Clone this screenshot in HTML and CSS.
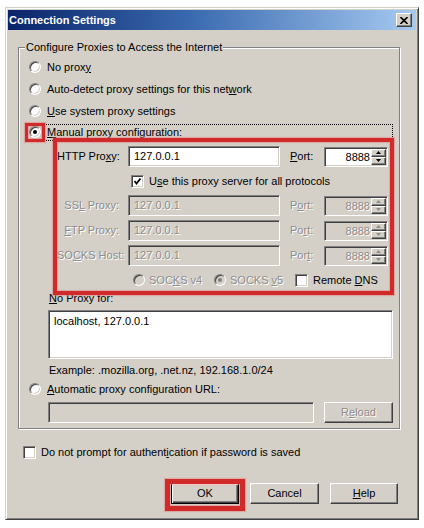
FILE: index.html
```html
<!DOCTYPE html>
<html>
<head>
<meta charset="utf-8">
<link rel="stylesheet" href="styles.css">
</head>
<body>
<div class="window">
  <div class="titlebar">
    <span class="title">Connection Settings</span>
    <span class="close"><svg width="8" height="7" viewBox="0 0 8 7"><path d="M0.5 0 L7.5 7 M7.5 0 L0.5 7" stroke="#000" stroke-width="1.6"/></svg></span>
  </div>
  <div class="client">
    <fieldset class="group">
      <legend>Configure Proxies to Access the Internet</legend>
      <div class="opt"><span class="slot"><span class="radio"></span></span><span>No prox<u>y</u></span></div>
      <div class="opt"><span class="slot"><span class="radio"></span></span><span>Auto-detect proxy settings for this net<u>w</u>ork</span></div>
      <div class="opt"><span class="slot"><span class="radio"></span></span><span><u>U</u>se system proxy settings</span></div>
      <div class="opt opt-manual"><span class="slot"><span class="radio on"></span><span class="mark mark-radio"></span></span><span class="focus"><u>M</u>anual proxy configuration:</span></div>
      <div class="manual">
        <span class="mark mark-manual"></span>
        <div class="prow">
          <span class="plabel">HTTP Pro<u>x</u>y:</span>
          <span class="field host">127.0.0.1</span>
          <span class="portlabel"><u>P</u>ort:</span>
          <span class="field spin"><span class="val">8888</span><span class="arrows"><span class="arr"><svg width="5" height="3" viewBox="0 0 5 3"><polygon points="0,3 2.5,0 5,3" fill="#000"/></svg></span><span class="arr"><svg width="5" height="3" viewBox="0 0 5 3"><polygon points="0,0 5,0 2.5,3" fill="#000"/></svg></span></span></span>
        </div>
        <div class="chkrow"><span class="check"><svg width="9" height="9" viewBox="0 0 9 9"><polyline points="1.5,4 3.5,6.5 7.5,1.5" fill="none" stroke="#000" stroke-width="1.8"/></svg></span><span>U<u>s</u>e this proxy server for all protocols</span></div>
        <div class="prow dis">
          <span class="plabel">SS<u>L</u> Proxy:</span>
          <span class="field host">127.0.0.1</span>
          <span class="portlabel">P<u>o</u>rt:</span>
          <span class="field spin"><span class="val">8888</span><span class="arrows"><span class="arr"><svg width="5" height="3" viewBox="0 0 5 3"><polygon points="0,3 2.5,0 5,3" fill="#8d8d8d"/></svg></span><span class="arr"><svg width="5" height="3" viewBox="0 0 5 3"><polygon points="0,0 5,0 2.5,3" fill="#8d8d8d"/></svg></span></span></span>
        </div>
        <div class="prow dis">
          <span class="plabel"><u>F</u>TP Proxy:</span>
          <span class="field host">127.0.0.1</span>
          <span class="portlabel">Po<u>r</u>t:</span>
          <span class="field spin"><span class="val">8888</span><span class="arrows"><span class="arr"><svg width="5" height="3" viewBox="0 0 5 3"><polygon points="0,3 2.5,0 5,3" fill="#8d8d8d"/></svg></span><span class="arr"><svg width="5" height="3" viewBox="0 0 5 3"><polygon points="0,0 5,0 2.5,3" fill="#8d8d8d"/></svg></span></span></span>
        </div>
        <div class="prow dis">
          <span class="plabel">SO<u>C</u>KS Host:</span>
          <span class="field host">127.0.0.1</span>
          <span class="portlabel">Por<u>t</u>:</span>
          <span class="field spin"><span class="val">8888</span><span class="arrows"><span class="arr"><svg width="5" height="3" viewBox="0 0 5 3"><polygon points="0,3 2.5,0 5,3" fill="#8d8d8d"/></svg></span><span class="arr"><svg width="5" height="3" viewBox="0 0 5 3"><polygon points="0,0 5,0 2.5,3" fill="#8d8d8d"/></svg></span></span></span>
        </div>
        <div class="verrow">
          <span class="ver dis"><span class="radio"></span><span>SOC<u>K</u>S v4</span></span>
          <span class="ver dis"><span class="radio on"></span><span>SOCKS <u>v</u>5</span></span>
          <span class="ver"><span class="check"></span><span>Remote <u>D</u>NS</span></span>
        </div>
        <div class="nplabel"><u>N</u>o Proxy for:</div>
        <div class="field textarea">localhost, 127.0.0.1</div>
        <div class="example">Example: .mozilla.org, .net.nz, 192.168.1.0/24</div>
      </div>
      <div class="opt opt-auto"><span class="slot"><span class="radio"></span></span><span><u>A</u>utomatic proxy configuration URL:</span></div>
      <div class="urlrow">
        <span class="field url dis"></span>
        <span class="btn reload dis">R<u>e</u>load</span>
      </div>
    </fieldset>
    <div class="prompt"><span class="check"></span><span>Do not prompt for authent<u>i</u>cation if password is saved</span></div>
    <div class="buttons">
      <span class="okwrap"><span class="btn btn-default">OK</span><span class="mark mark-ok"></span></span>
      <span class="btn btn-cancel">Cancel</span>
      <span class="btn"><u>H</u>elp</span>
    </div>
  </div>
</div>
</body>
</html>
```
FILE: styles.css
```css
body {
  margin: 0;
  background: #fff;
  font: 11px/13px "Liberation Sans", Arial, sans-serif;
  color: #000;
}
u { text-underline-offset: 1px; }

.window {
  margin: 7px 0 0 5px;
  width: 414px;
  height: 513px;
  box-sizing: border-box;
  background: #d4d0c8;
  border: 1px solid;
  border-color: #d4d0c8 #404040 #404040 #d4d0c8;
  box-shadow: inset 1px 1px #fff, inset -1px -1px #808080;
  padding: 2px;
  display: flex;
  flex-direction: column;
}

.titlebar {
  height: 20px;
  flex: none;
  display: flex;
  align-items: center;
  background: linear-gradient(to right, #0a246a 0%, #3a6ab0 45%, #a6caf0 100%);
  padding: 0 4px 0 1px;
}
.title {
  flex: 1;
  color: #fff;
  font-weight: bold;
}
.close {
  width: 16px;
  height: 14px;
  box-sizing: border-box;
  background: #d4d0c8;
  border: 1px solid;
  border-color: #fff #404040 #404040 #fff;
  box-shadow: inset -1px -1px #808080;
  display: flex;
  align-items: center;
  justify-content: center;
}

.client {
  flex: 1;
  display: flex;
  flex-direction: column;
}

.group {
  margin: 11px 0 0 10px;
  width: 382px;
  box-sizing: border-box;
  min-width: 0;
  border: 1px solid #808080;
  box-shadow: 1px 1px 0 #fff, inset 1px 1px 0 #fff;
  padding: 2px 6px 5px 6px;
}
.group legend {
  padding: 0 1px;
  line-height: 13px;
  background: #d4d0c8;
}

.opt {
  display: flex;
  align-items: center;
  height: 22px;
}
.opt-manual { height: 20px; }
.opt-auto { margin-top: 1px; }

.slot {
  position: relative;
  flex: none;
  width: 20px;
  height: 19px;
  margin-right: 2px;
  display: flex;
  align-items: center;
  justify-content: center;
}

.radio {
  flex: none;
  width: 12px;
  height: 12px;
  box-sizing: border-box;
  border-radius: 50%;
  border: 1px solid;
  border-color: #808080 #fff #fff #808080;
  box-shadow: inset 1px 1px #404040, inset -1px -1px #d4d0c8;
  background: #fff;
  display: flex;
  align-items: center;
  justify-content: center;
}
.radio.on::after {
  content: "";
  width: 4px;
  height: 4px;
  border-radius: 50%;
  background: #000;
}
.dis .radio { background: #d4d0c8; }
.dis .radio.on::after { background: #808080; }

.check {
  flex: none;
  width: 13px;
  height: 13px;
  box-sizing: border-box;
  border: 1px solid;
  border-color: #808080 #fff #fff #808080;
  box-shadow: inset 1px 1px #404040, inset -1px -1px #d4d0c8;
  background: #fff;
  margin-right: 5px;
  display: flex;
  align-items: center;
  justify-content: center;
}

.focus {
  flex: 1;
  height: 17px;
  box-sizing: border-box;
  display: flex;
  align-items: center;
  margin-left: -3px;
  padding-left: 2px;
  border: 1px dotted #000;
}

.mark {
  position: absolute;
  box-sizing: border-box;
  border: 3px solid #d12a2a;
  box-shadow: 0 0 1px 1px rgba(230, 120, 120, 0.45), inset 0 0 1px 1px rgba(230, 120, 120, 0.45);
  pointer-events: none;
}
.mark-radio { left: 0; top: 0; width: 20px; height: 19px; }
.mark-manual { left: 28px; top: -4px; width: 341px; height: 157px; border-width: 4px; }
.mark-ok { left: -6px; top: -4px; width: 80px; height: 32px; border-width: 5px; }

.manual {
  position: relative;
  padding-top: 4px;
}

.field {
  box-sizing: border-box;
  border: 1px solid;
  border-color: #808080 #fff #fff #808080;
  box-shadow: inset 1px 1px #404040, inset -1px -1px #d4d0c8;
  background: #fff;
}

.prow {
  display: flex;
  align-items: center;
  height: 21px;
  margin-left: 32px;
}
.prow + .prow { margin-top: 4px; }
.plabel {
  width: 62px;
  text-align: right;
  margin-right: 9px;
  white-space: nowrap;
}
.host {
  width: 152px;
  height: 21px;
  padding-left: 5px;
  display: flex;
  align-items: center;
}
.portlabel {
  margin-left: 10px;
  width: 34px;
}
.spin {
  width: 64px;
  height: 20px;
  padding: 1px;
  display: flex;
}
.spin .val {
  flex: 1;
  text-align: right;
  line-height: 16px;
  padding-right: 1px;
}
.arrows {
  width: 15px;
  display: flex;
  flex-direction: column;
}
.arr {
  flex: 1;
  box-sizing: border-box;
  background: #d4d0c8;
  border: 1px solid;
  border-color: #fff #404040 #404040 #fff;
  box-shadow: inset -1px -1px #808080;
  display: flex;
  align-items: center;
  justify-content: center;
  text-shadow: none;
}
.arr svg { display: block; }

.dis { color: #8d8d8d; text-shadow: 1px 1px 0 #fff; }
.dis .field, .field.dis { background: #d4d0c8; }
.dis .plabel, .dis .portlabel { color: #8d8d8d; }

.chkrow {
  display: flex;
  align-items: center;
  height: 28px;
  padding-left: 106px;
}

.verrow {
  display: flex;
  align-items: center;
  height: 24px;
  margin-top: 2px;
  padding-left: 108px;
}
.ver {
  width: 81px;
  display: flex;
  align-items: center;
  white-space: nowrap;
}
.ver .radio { margin-right: 4px; }

.nplabel { margin-left: 24px; }
.textarea {
  margin: 5px 0 0 23px;
  height: 49px;
  padding: 4px 5px;
}
.example { margin: 5px 0 0 24px; }

.urlrow {
  display: flex;
  margin: 2px 0 0 23px;
  height: 21px;
}
.url { width: 266px; height: 21px; }

.btn {
  height: 21px;
  box-sizing: border-box;
  background: #d4d0c8;
  border: 1px solid;
  border-color: #fff #404040 #404040 #fff;
  box-shadow: inset -1px -1px #808080;
  display: flex;
  align-items: center;
  justify-content: center;
  width: 68px;
}
.reload { margin-left: 10px; width: 69px; }
.btn-default {
  border-color: #000;
  box-shadow: inset 1px 1px #fff, inset -1px -1px #404040, inset -2px -2px #808080;
}
.btn-cancel { width: 69px; }

.prompt {
  display: flex;
  align-items: center;
  height: 16px;
  margin: 15px 0 0 15px;
}

.buttons {
  display: flex;
  justify-content: flex-end;
  gap: 11px;
  margin-top: 23px;
  padding-right: 18px;
}
.okwrap { position: relative; }
```
